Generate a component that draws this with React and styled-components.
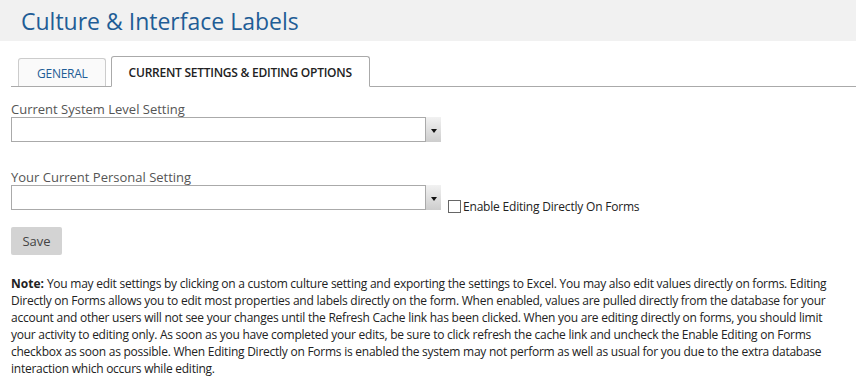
import React from "react";
import styled, { createGlobalStyle } from "styled-components";

const Global = createGlobalStyle`
  html, body { margin: 0; padding: 0; background: #fff; }
  body { font-family: "Open Sans", "Noto Sans", sans-serif; color: #333; }
`;

const Header = styled.div`
  background: #f1f1f1;
  height: 41px;
  padding-left: 21px;
  display: flex;
  align-items: flex-end;
`;

const Title = styled.h1`
  margin: 0 0 5px;
  font-size: 23px;
  font-weight: 400;
  color: #1f5d96;
  line-height: 30px;
`;

const Body = styled.div`
  padding: 16px 0 0 11px;
`;

const TabBar = styled.div`
  display: flex;
  gap: 5px;
  padding-left: 7px;
  border-bottom: 1px solid #aaa;
  height: 29px;
  align-items: flex-end;
`;

const Tab = styled.div`
  box-sizing: border-box;
  padding: 1px 17px 0 ${(p) => (p.$active ? "17px" : "18px")};
  border: 1px solid ${(p) => (p.$active ? "#aaa" : "#ccc")};
  border-bottom: ${(p) => (p.$active ? "1px solid #fff" : "none")};
  border-radius: 3px 3px 0 0;
  margin-bottom: ${(p) => (p.$active ? "-1px" : "0")};
  height: ${(p) => (p.$active ? "31px" : "28px")};
  background: ${(p) => (p.$active ? "#fff" : "#fafafa")};
  color: ${(p) => (p.$active ? "#222" : "#1f5d96")};
  font-size: 12px;
  letter-spacing: -0.25px;
  font-weight: ${(p) => (p.$active ? 600 : 400)};
  display: flex;
  align-items: center;
`;

const Label = styled.div`
  font-size: 13px;
  color: #555;
  line-height: 18px;
  margin-top: ${(p) => p.$mt || "0"};
`;

const Row = styled.div`
  display: flex;
  align-items: flex-end;
  margin-top: -1px;
`;

const SelectBox = styled.div`
  display: flex;
  width: 430px;
  height: 25px;
`;

const SelectField = styled.div`
  flex: 1;
  border: 1px solid #aaa;
  border-right: none;
  background: #fff;
`;

const SelectButton = styled.div`
  width: 15px;
  background: linear-gradient(#f2f2f2, #cdcdcd);
  display: flex;
  align-items: center;
  justify-content: center;
  border-left: 1px solid #aaa;
`;

const Arrow = styled.div`
  width: 0;
  height: 0;
  border-left: 3.5px solid transparent;
  border-right: 3.5px solid transparent;
  border-top: 4px solid #111;
  margin-top: 2px;
`;

const CheckLabel = styled.label`
  display: flex;
  align-items: center;
  font-size: 12px;
  letter-spacing: -0.2px;
  color: #222;
  margin-left: 7px;
  margin-bottom: -5px;
`;

const Box = styled.span`
  width: 11px;
  height: 11px;
  border: 1px solid #666;
  background: #fff;
  margin-right: 2px;
`;

const SaveButton = styled.button`
  margin-top: 17px;
  width: 51px;
  height: 28px;
  border: none;
  border-radius: 2px;
  background: #d3d3d3;
  color: #444;
  font-family: inherit;
  font-size: 13px;
  padding: 0;
`;

const Note = styled.p`
  margin: 20px 0 0;
  font-size: 12px;
  line-height: 17px;
  letter-spacing: -0.25px;
  color: #222;
  padding-right: 10px;
`;

const NoteLead = styled.b`
  font-weight: 700;
  color: #222;
  letter-spacing: 0;
  margin-right: 3px;
`;

function Select() {
  return (
    <SelectBox>
      <SelectField />
      <SelectButton>
        <Arrow />
      </SelectButton>
    </SelectBox>
  );
}

export default function App() {
  return (
    <>
      <Global />
      <Header>
        <Title>Culture &amp; Interface Labels</Title>
      </Header>
      <Body>
        <TabBar>
          <Tab>GENERAL</Tab>
          <Tab $active>CURRENT SETTINGS &amp; EDITING OPTIONS</Tab>
        </TabBar>
        <Label $mt="13px">Current System Level Setting</Label>
        <Row>
          <Select />
        </Row>
        <Label $mt="26px">Your Current Personal Setting</Label>
        <Row>
          <Select />
          <CheckLabel>
            <Box />
            Enable Editing Directly On Forms
          </CheckLabel>
        </Row>
        <SaveButton>Save</SaveButton>
        <Note>
          <NoteLead>Note:</NoteLead>You may edit settings by clicking on a custom culture setting and exporting the settings to Excel. You may also edit values directly on forms. Editing Directly on Forms allows you to edit most properties and labels directly on the form. When enabled, values are pulled directly from the database for your account and other users will not see your changes until the Refresh Cache link has been clicked. When you are editing directly on forms, you should limit your activity to editing only. As soon as you have completed your edits, be sure to click refresh the cache link and uncheck the Enable Editing on Forms checkbox as soon as possible. When Editing Directly on Forms is enabled the system may not perform as well as usual for you due to the extra database interaction which occurs while editing.
        </Note>
      </Body>
    </>
  );
}
